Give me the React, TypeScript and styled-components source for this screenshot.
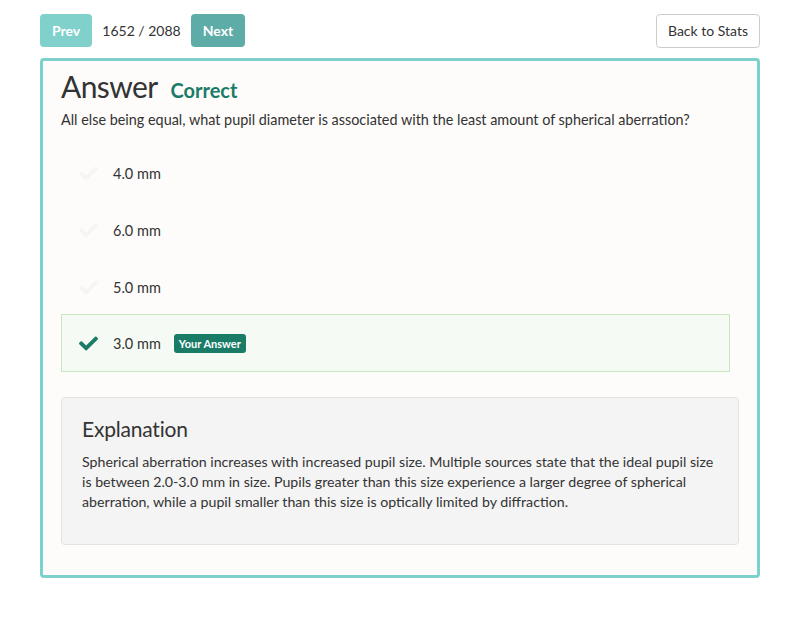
import React from "react";
import styled, { createGlobalStyle } from "styled-components";
import { FaCheck } from "react-icons/fa";

const GlobalStyle = createGlobalStyle`
  body {
    margin: 0;
    background: #ffffff;
    font-family: "Lato", "Open Sans", sans-serif;
    color: #333333;
  }
`;

const Page = styled.div`
  width: 720px;
  padding: 14px 40px 40px;
`;

const TopBar = styled.div`
  display: flex;
  align-items: center;
  height: 33px;
`;

const NavButton = styled.button<{ $dim?: boolean }>`
  height: 33px;
  padding: 0 12px;
  border: none;
  border-radius: 4px;
  background: ${(p) => (p.$dim ? "#80d0cc" : "#5eaca8")};
  color: #ffffff;
  font-family: inherit;
  font-weight: 700;
  font-size: 14px;
`;

const Counter = styled.span`
  font-size: 14px;
  margin: 0 10px;
  color: #333;
`;

const StatsButton = styled.button`
  margin-left: auto;
  height: 34px;
  padding: 0 11px;
  border: 1px solid #cccccc;
  border-radius: 4px;
  background: #ffffff;
  color: #333;
  font-family: inherit;
  font-size: 14px;
`;

const Card = styled.div`
  margin-top: 11px;
  border: 3px solid #7dd0cc;
  border-radius: 4px;
  background: #fdfcfa;
  padding: 7px 18px 30px;
`;

const Heading = styled.div`
  display: flex;
  align-items: baseline;
  gap: 13px;
  height: 36px;
`;

const Title = styled.h2`
  margin: 0;
  font-size: 30px;
  font-weight: 400;
  letter-spacing: -0.6px;
  color: #333;
`;

const Verdict = styled.span`
  font-size: 20px;
  font-weight: 700;
  color: #1a7b67;
`;

const Question = styled.p`
  margin: 6px 0 15px;
  font-size: 14.4px;
  line-height: 20px;
`;

const Options = styled.div`
  display: flex;
  flex-direction: column;
  width: calc(100% - 9px);
`;

const Option = styled.div<{ $picked?: boolean }>`
  display: flex;
  align-items: center;
  height: ${(p) => (p.$picked ? "58px" : "57px")};
  margin-top: ${(p) => (p.$picked ? "-2px" : "0")};
  box-sizing: border-box;
  padding-left: 17px;
  border: 1px solid ${(p) => (p.$picked ? "#c8e7c0" : "transparent")};
  background: ${(p) => (p.$picked ? "#f5fbf4" : "transparent")};
`;

const Mark = styled.span<{ $picked?: boolean }>`
  display: flex;
  width: 20px;
  margin-right: 14px;
  font-size: 19px;
  color: ${(p) => (p.$picked ? "#1a7b67" : "#f6f5f2")};
`;

const OptionText = styled.span`
  font-size: 14.5px;
`;

const Badge = styled.span`
  margin-left: 13px;
  padding: 3px 5px;
  border-radius: 3px;
  background: #1a7b67;
  color: #fff;
  font-size: 11px;
  font-weight: 700;
`;

const Explanation = styled.div`
  margin-top: 25px;
  padding: 17px 20px 32px;
  background: #f4f4f4;
  border: 1px solid #e3e3e3;
  border-radius: 4px;
`;

const ExplanationTitle = styled.h3`
  margin: 0 0 9px;
  font-size: 21px;
  font-weight: 400;
  letter-spacing: -0.2px;
  line-height: 28px;
`;

const ExplanationText = styled.p`
  margin: 0;
  font-size: 14.2px;
  line-height: 20px;
`;

const options = [
  { label: "4.0 mm" },
  { label: "6.0 mm" },
  { label: "5.0 mm" },
  { label: "3.0 mm", picked: true },
];

export default function App() {
  return (
    <>
      <GlobalStyle />
      <Page>
        <TopBar>
          <NavButton $dim>Prev</NavButton>
          <Counter>1652 / 2088</Counter>
          <NavButton>Next</NavButton>
          <StatsButton>Back to Stats</StatsButton>
        </TopBar>
        <Card>
          <Heading>
            <Title>Answer</Title>
            <Verdict>Correct</Verdict>
          </Heading>
          <Question>
            All else being equal, what pupil diameter is associated with the least amount of
            spherical aberration?
          </Question>
          <Options>
            {options.map((o) => (
              <Option key={o.label} $picked={o.picked}>
                <Mark $picked={o.picked}>
                  <FaCheck />
                </Mark>
                <OptionText>{o.label}</OptionText>
                {o.picked && <Badge>Your Answer</Badge>}
              </Option>
            ))}
          </Options>
          <Explanation>
            <ExplanationTitle>Explanation</ExplanationTitle>
            <ExplanationText>
              Spherical aberration increases with increased pupil size. Multiple sources state
              that the ideal pupil size is between 2.0-3.0 mm in size. Pupils greater than this
              size experience a larger degree of spherical aberration, while a pupil smaller than
              this size is optically limited by diffraction.
            </ExplanationText>
          </Explanation>
        </Card>
      </Page>
    </>
  );
}
